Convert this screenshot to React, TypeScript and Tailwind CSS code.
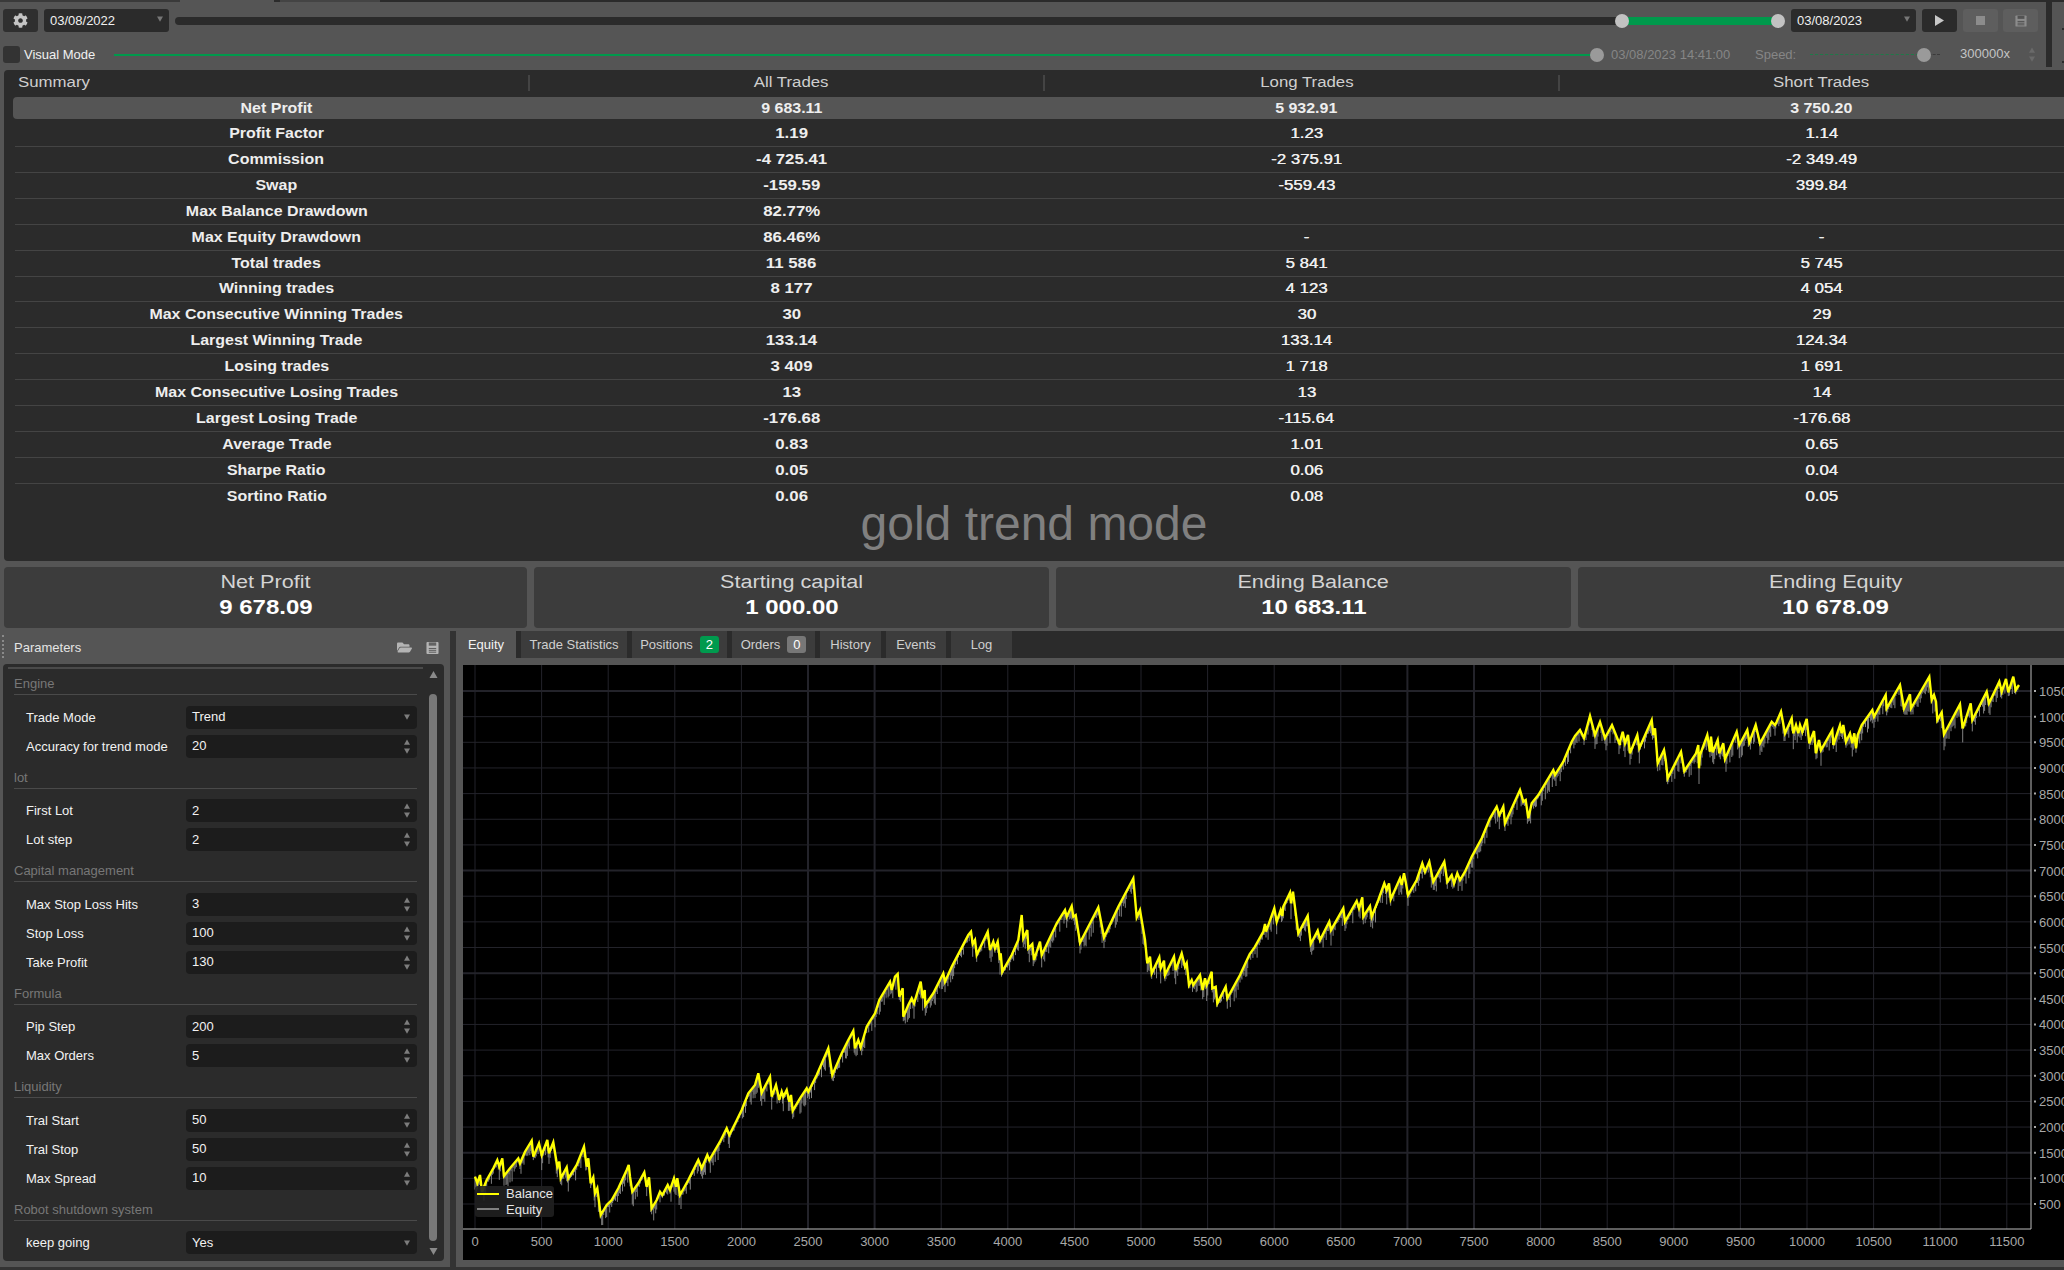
import { FaCog, FaFolderOpen } from "react-icons/fa";

type Row = { label: string; all: string; long: string; short: string };

const rows: Row[] = [
  { label: "Profit Factor", all: "1.19", long: "1.23", short: "1.14" },
  { label: "Commission", all: "-4 725.41", long: "-2 375.91", short: "-2 349.49" },
  { label: "Swap", all: "-159.59", long: "-559.43", short: "399.84" },
  { label: "Max Balance Drawdown", all: "82.77%", long: "", short: "" },
  { label: "Max Equity Drawdown", all: "86.46%", long: "-", short: "-" },
  { label: "Total trades", all: "11 586", long: "5 841", short: "5 745" },
  { label: "Winning trades", all: "8 177", long: "4 123", short: "4 054" },
  { label: "Max Consecutive Winning Trades", all: "30", long: "30", short: "29" },
  { label: "Largest Winning Trade", all: "133.14", long: "133.14", short: "124.34" },
  { label: "Losing trades", all: "3 409", long: "1 718", short: "1 691" },
  { label: "Max Consecutive Losing Trades", all: "13", long: "13", short: "14" },
  { label: "Largest Losing Trade", all: "-176.68", long: "-115.64", short: "-176.68" },
  { label: "Average Trade", all: "0.83", long: "1.01", short: "0.65" },
  { label: "Sharpe Ratio", all: "0.05", long: "0.06", short: "0.04" },
  { label: "Sortino Ratio", all: "0.06", long: "0.08", short: "0.05" },
];

const cards = [
  { title: "Net Profit", value: "9 678.09", width: "w-[523px]" },
  { title: "Starting capital", value: "1 000.00", width: "w-[515px]" },
  { title: "Ending Balance", value: "10 683.11", width: "w-[515px]" },
  { title: "Ending Equity", value: "10 678.09", width: "w-[515px]" },
];

type Param = { label: string; value: string; select?: boolean };
const groups: { name: string; params: Param[] }[] = [
  {
    name: "Engine",
    params: [
      { label: "Trade Mode", value: "Trend", select: true },
      { label: "Accuracy for trend mode", value: "20" },
    ],
  },
  {
    name: "lot",
    params: [
      { label: "First Lot", value: "2" },
      { label: "Lot step", value: "2" },
    ],
  },
  {
    name: "Capital management",
    params: [
      { label: "Max Stop Loss Hits", value: "3" },
      { label: "Stop Loss", value: "100" },
      { label: "Take Profit", value: "130" },
    ],
  },
  {
    name: "Formula",
    params: [
      { label: "Pip Step", value: "200" },
      { label: "Max Orders", value: "5" },
    ],
  },
  {
    name: "Liquidity",
    params: [
      { label: "Tral Start", value: "50" },
      { label: "Tral Stop", value: "50" },
      { label: "Max Spread", value: "10" },
    ],
  },
  {
    name: "Robot shutdown system",
    params: [{ label: "keep going", value: "Yes", select: true }],
  },
];

// traced from the equity curve, each run is [originX, originY, px...] at 3x
const traces: [number, number, number[]][] = [
  [470, 960, [15,650,22,670,30,645,36,695,50,660,70,625,82,600,88,620,97,595,102,648,120,625,145,595,150,610,165,575,185,542,190,590,207,550,215,585,232,540,237,580,250,547,262,620,268,605,272,655,290,622,295,655,320,615,342,560,350,620,355,595,362,670,370,652,375,700,382,685,392,765,410,735,425,720,445,685,470,630,476,615,480,650,487,695,505,670,523,637,530,680,537,652,545,745,560,720,570,695,577,705,593,675,600,690,612,655,618,680,622,655,630,705,655,660,685,600,695,625,712,585,718,600,750,545,770,505,778,525,798,485,815,450,835,400,855,375,865,340,875,398,900,350,905,410,918,375,928,420,935,395,940,410,950,390,958,425,963,405,968,452,990,415,1010,385,1015,395,1040,345,1075,265,1087,345,1115,280,1135,240,1150,212,1155,265,1165,240,1172,262,1190,200,1199,185]],
  [850, 800, [75,640,88,600,120,545,125,570,135,530,143,522,148,590,158,565,160,650,175,615,185,595,192,610,212,545,218,595,224,570,226,615,250,580,280,520,285,545,305,500,355,405,363,395,368,432,375,420,380,465,413,395,420,450,430,425,435,445,443,425,450,480,452,460,457,515,485,465,505,420,515,345,520,415,532,390,535,445,547,432,552,480,570,425,575,465,620,370,645,330,650,350,665,318,670,350,677,345,690,428,745,322,762,412,805,320,850,235,860,352,870,330,885,420,892,490,900,470,905,520,928,472,932,505,942,482,945,525,972,470,977,510,995,460,1005,500,1010,490,1017,555,1025,540,1030,555,1050,525,1058,570,1065,535,1070,555,1085,515,1087,565,1097,560,1102,610,1127,560,1132,595,1170,525,1199,462]],
  [1230, 740, [75,620,100,575,105,552,108,575,133,505,140,545,152,510,157,528,160,500,180,458,183,490,189,455,205,580,233,527,242,612,263,572,270,600,298,545,303,570,340,505,345,545,380,483,387,505,397,472,400,530,420,498,425,530,445,480,463,430,470,450,477,430,482,478,510,415,515,435,522,400,527,425,534,465,560,420,577,370,585,395,598,365,610,425,643,365,652,425,665,405,672,430,682,400,690,420,705,395,725,350,755,295,780,235,800,200,808,225,820,200,825,250,870,150,880,185,887,180,895,235,905,190,925,165,970,90,975,105,1000,65,1025,5]],
  [1560, 700, [45,108,60,90,72,114,90,48,105,105,120,66,135,114,156,75,180,135]],
  [1620, 665, [0,230,8,200,15,235,24,210,30,265,52,210,58,250,95,165,100,210,105,190,113,295,132,255,137,285,143,340,183,260,193,318,228,265,235,240,237,310,240,270,262,210,270,260,273,215,278,262,293,225,298,265,310,235,315,282,350,200,358,240,382,195,388,232,407,180,420,235,455,170,465,180,470,170,483,140,495,205,515,160,520,205,528,180,535,205,540,180,547,200,560,162,568,235,582,198,588,265,597,225,603,255,637,195,640,240,660,180,665,205,670,180,678,230,690,205,697,235,703,205,708,250,713,210,725,180,757,135,762,155,797,90,800,130,840,60,852,130,870,88,873,130,928,35,935,105,942,90,948,110,952,165,965,142,972,208,1020,118,1028,190,1052,115,1057,165,1100,80,1107,115,1138,50,1145,80,1158,42,1165,82,1180,35,1187,75,1197,60]],
];

const curve: [number, number][] = traces.flatMap(([ox, oy, p]) => {
  const pts: [number, number][] = [];
  for (let i = 0; i < p.length; i += 2) pts.push([ox + p[i] / 3, oy + p[i + 1] / 3]);
  return pts;
});

const balanceLine = curve.map(([x, y]) => `${x.toFixed(1)},${y.toFixed(1)}`).join(" ");

// equity dips under the balance line between closed trades
function equitySpikes() {
  let d = "";
  for (let i = 1; i < curve.length; i++) {
    const [x0, y0] = curve[i - 1];
    const [x1, y1] = curve[i];
    const steps = Math.max(1, Math.round(x1 - x0));
    for (let s = 0; s < steps; s++) {
      const x = x0 + ((x1 - x0) * s) / steps;
      const y = y0 + ((y1 - y0) * s) / steps;
      const r = Math.abs(Math.sin(x * 12.9898) * 43758.5453) % 1;
      d += `M${x.toFixed(1)} ${y.toFixed(1)}v${(3 + r * r * 13).toFixed(1)}`;
    }
  }
  return d;
}

const xTicks = Array.from({ length: 24 }, (_, i) => i);
const yTicks = Array.from({ length: 21 }, (_, i) => (i + 1) * 500);
const gridX = (i: number) => 475 + 66.6 * i;
const gridY = (v: number) => 1204 - ((v - 500) / 500) * 25.65;

function Chart() {
  return (
    <svg viewBox="463 665 1601 595" className="block w-[1601px] h-[595px] bg-black">
      {xTicks.map((i) => (
        <line
          key={i}
          x1={gridX(i)}
          x2={gridX(i)}
          y1={665}
          y2={1229}
          stroke="#23232a"
          strokeWidth={[5, 6, 14, 15].includes(i) ? 2 : 1}
        />
      ))}
      {yTicks.map((v) => (
        <g key={v}>
          <line
            x1={463}
            x2={2031}
            y1={gridY(v)}
            y2={gridY(v)}
            stroke="#23232a"
            strokeWidth={[1500, 5000, 7000, 10500].includes(v) ? 2 : 1}
          />
          <line x1={2034} x2={2036} y1={gridY(v)} y2={gridY(v)} stroke="#aaaaaa" strokeWidth={2} />
          <text x={2039} y={gridY(v) + 5} fill="#a8a8a8" fontSize={13}>
            {v}
          </text>
        </g>
      ))}
      {xTicks.map((i) => (
        <text key={i} x={gridX(i)} y={1246} fill="#a8a8a8" fontSize={13} textAnchor="middle">
          {i * 500}
        </text>
      ))}
      <path d={equitySpikes()} stroke="#808080" strokeWidth={1} fill="none" />
      <polyline points={balanceLine} stroke="#ffff00" strokeWidth={2.4} fill="none" strokeLinejoin="miter" />
      <path d="M2031 665V1229H463" stroke="#bdbdbd" strokeWidth={1} fill="none" />
      <rect x={475} y={1186} width={79} height={31} rx={3} fill="#202020" fillOpacity={0.9} />
      <line x1={477} x2={499} y1={1194} y2={1194} stroke="#ffff00" strokeWidth={2} />
      <line x1={477} x2={499} y1={1209} y2={1209} stroke="#808080" strokeWidth={2} />
      <text x={506} y={1198} fill="#e6e6e6" fontSize={13}>
        Balance
      </text>
      <text x={506} y={1214} fill="#e6e6e6" fontSize={13}>
        Equity
      </text>
    </svg>
  );
}

function Tri({ down, className }: { down?: boolean; className?: string }) {
  return (
    <svg viewBox="0 0 8 7" className={className} fill="currentColor">
      <path d={down ? "M0 0h8L4 7z" : "M0 7h8L4 0z"} />
    </svg>
  );
}

function Spinner() {
  return (
    <div className="flex flex-col gap-[3px] text-[#7d7d7d]">
      <Tri className="w-[6px] h-[6px]" />
      <Tri down className="w-[6px] h-[6px]" />
    </div>
  );
}

function Floppy({ className }: { className?: string }) {
  return (
    <svg viewBox="0 0 14 14" className={className} fill="none">
      <rect x="0.5" y="0.5" width="13" height="13" rx="1" fill="currentColor" />
      <rect x="3" y="1" width="8" height="3.5" fill="#2b2b2b" opacity="0.6" />
      <path d="M3 7.5h8M3 9.5h8M3 11.5h8" stroke="#2b2b2b" strokeWidth="1" opacity="0.7" />
    </svg>
  );
}

// the terminal draws this part of the report stretched sideways
function Wide({ children, className = "" }: { children: React.ReactNode; className?: string }) {
  return <span className={`inline-block scale-x-[1.2] whitespace-nowrap ${className}`}>{children}</span>;
}

function WideBold({ children }: { children: React.ReactNode }) {
  return <span className="inline-block scale-x-[1.14] whitespace-nowrap font-bold">{children}</span>;
}

function DateBox({ value, className }: { value: string; className: string }) {
  return (
    <div className={`h-[23px] w-[125px] rounded-[3px] bg-[#2b2b2b] flex items-center pl-[6px] pr-[6px] text-[13px] text-[#f0f0f0] ${className}`}>
      <span className="flex-1">{value}</span>
      <Tri down className="w-[6px] h-[6px] text-[#777777] mb-[4px]" />
    </div>
  );
}

function Toolbar() {
  return (
    <div className="flex h-[65px] shrink-0">
      <div className="w-[2046px] flex flex-col pt-[7px]">
        <div className="flex items-center h-[23px] pl-[3px]">
          <button className="h-[23px] w-[35px] rounded-[3px] bg-[#2f2f2f] flex items-center justify-center text-[#c4c4c4]">
            <FaCog size={15} />
          </button>
          <DateBox value="03/08/2022" className="ml-[6px]" />
          <div className="relative flex ml-[6px] w-[1610px] h-[8px]">
            <div className="flex-1 rounded-l-[4px] bg-[#2b2b2b]" />
            <div className="w-[156px] mr-[7px] bg-[#00994c]" />
            <span className="absolute left-[1440px] top-[-3px] w-[14px] h-[14px] rounded-full bg-[#c2c2c2]" />
            <span className="absolute left-[1596px] top-[-3px] w-[14px] h-[14px] rounded-full bg-[#c2c2c2]" />
          </div>
          <DateBox value="03/08/2023" className="ml-[6px]" />
          <button className="ml-[6px] h-[23px] w-[35px] rounded-[3px] bg-[#2b2b2b] flex items-center justify-center">
            <svg viewBox="0 0 9 11" className="w-[9px] h-[11px]" fill="#c8c8c8">
              <path d="M0 0l9 5.5L0 11z" />
            </svg>
          </button>
          <button className="ml-[6px] h-[23px] w-[35px] rounded-[3px] bg-[#5e5e5e] flex items-center justify-center">
            <span className="w-[9px] h-[9px] bg-[#8c8c8c]" />
          </button>
          <button className="ml-[5px] h-[23px] w-[35px] rounded-[3px] bg-[#5e5e5e] flex items-center justify-center text-[#8c8c8c]">
            <Floppy className="w-[12px] h-[14px]" />
          </button>
        </div>
        <div className="flex items-center h-[17px] mt-[14px] pl-[3px] text-[13px]">
          <span className="w-[17px] h-[17px] rounded-[3px] bg-[#333333]" />
          <span className="ml-[4px] w-[90px] text-[#f0f0f0] leading-none mb-[1px]">Visual Mode</span>
          <div className="relative w-[1483px] h-[2px] bg-[#00994c]">
            <span className="absolute right-[-7px] top-[-6px] w-[14px] h-[14px] rounded-full bg-[#9a9a9a]" />
          </div>
          <span className="ml-[14px] w-[144px] text-[#868686]">03/08/2023 14:41:00</span>
          <span className="w-[55px] text-[#868686]">Speed:</span>
          <div className="relative w-[130px] h-[1px] flex">
            <span className="w-[114px] border-t border-dashed border-[#1f7a48]" />
            <span className="flex-1 border-t border-dashed border-[#3b3b3b]" />
            <span className="absolute left-[107px] top-[-6px] w-[14px] h-[14px] rounded-full bg-[#9a9a9a]" />
          </div>
          <span className="ml-[20px] w-[69px] text-[#c4c4c4] mb-[1px]">300000x</span>
          <div className="flex flex-col gap-[3px] text-[#6a6a6a]">
            <Tri className="w-[6px] h-[6px]" />
            <Tri down className="w-[6px] h-[6px]" />
          </div>
        </div>
      </div>
      <div className="w-[6px] bg-[#2b2b2b]" />
      <div className="flex-1 flex flex-col items-end gap-[31px] pt-[26px]">
        <span className="w-[2px] h-[2px] bg-[#2b2b2b]" />
        <span className="w-[2px] h-[2px] bg-[#2b2b2b]" />
      </div>
    </div>
  );
}

function Summary() {
  return (
    <div className="ml-[4px] mt-[3px] h-[491px] shrink-0 rounded-l-[4px] bg-[#2b2b2b] overflow-hidden text-[14px] text-[#eeeeee]">
      <div className="grid grid-cols-[repeat(4,515px)] h-[25px] pl-[10px] text-[#cfcfcf]">
        {["Summary", "All Trades", "Long Trades", "Short Trades"].map((h, i) => (
          <div key={h} className={`relative flex items-center ${i === 0 ? "pl-[4px]" : "justify-center pl-[10px]"}`}>
            <Wide className={i === 0 ? "origin-left" : ""}>{h}</Wide>
            {i < 3 && <span className="absolute right-[-1px] top-[5px] h-[16px] w-[2px] bg-[#444444]" />}
          </div>
        ))}
      </div>
      <div className="mt-[2px] ml-[9px] h-[22px] rounded-l-[4px] bg-[#555555] grid grid-cols-[repeat(4,515px)] pl-[6px] items-center">
        {["Net Profit", "9 683.11", "5 932.91", "3 750.20"].map((v) => (
          <div key={v} className="text-center">
            <WideBold>{v}</WideBold>
          </div>
        ))}
      </div>
      <div className="mt-[2px] ml-[11px]">
        {rows.map((r, i) => (
          <div
            key={r.label}
            className={`grid grid-cols-[repeat(4,515px)] pl-[4px] h-[25.93px] items-center ${i < rows.length - 1 ? "border-b border-[#444444]" : ""}`}
          >
            <div className="text-center">
              <WideBold>{r.label}</WideBold>
            </div>
            <div className="text-center">
              <Wide className="font-bold">{r.all}</Wide>
            </div>
            <div className="text-center [text-shadow:0.3px_0_0_currentColor]">
              <Wide>{r.long}</Wide>
            </div>
            <div className="text-center [text-shadow:0.3px_0_0_currentColor]">
              <Wide>{r.short}</Wide>
            </div>
          </div>
        ))}
      </div>
      <div className="mt-[-14px] text-center text-[48px] leading-[56px] text-[#808080]">gold trend mode</div>
    </div>
  );
}

function Cards() {
  return (
    <div className="flex gap-[7px] ml-[4px] mt-[6px] h-[61px] shrink-0">
      {cards.map((c) => (
        <div key={c.title} className={`${c.width} shrink-0 rounded-[4px] bg-[#3c3c3c] flex flex-col items-center pt-[4px]`}>
          <Wide className="text-[18px] leading-[22px] text-[#d4d4d4]">{c.title}</Wide>
          <Wide className="text-[20px] leading-[24px] mt-[2px] font-bold text-white">{c.value}</Wide>
        </div>
      ))}
    </div>
  );
}

function ParamRow({ label, value, select }: Param) {
  return (
    <div className="flex items-center h-[23px] text-[13px] text-[#f2f2f2]">
      <span className="w-[172px] pl-[12px] leading-none">{label}</span>
      <div className="w-[231px] h-[23px] rounded-[4px] bg-[#1c1c1c] flex items-center pl-[6px] pr-[7px]">
        <span className="flex-1">{value}</span>
        {select ? <Tri down className="w-[6px] h-[6px] text-[#7d7d7d]" /> : <Spinner />}
      </div>
    </div>
  );
}

function Parameters() {
  return (
    <div className="w-[450px] shrink-0 flex flex-col">
      <div className="relative h-[33px] flex items-center pl-[14px] pr-[11px] text-[13px] text-[#e4e4e4]">
        <span className="absolute left-[2px] top-[4px] h-[23px] w-[2px] border-l-2 border-dotted border-[#8a8a8a]" />
        <span className="flex-1">Parameters</span>
        <FaFolderOpen size={15} className="text-[#b4b4b4]" />
        <Floppy className="ml-[14px] w-[13px] h-[14px] text-[#b4b4b4]" />
      </div>
      <div className="relative ml-[3px] w-[441px] h-[597px] rounded-[4px] bg-[#2b2b2b] pl-[11px]">
        <span className="absolute left-[5px] top-[3px] w-[415px] h-[2px] bg-[#4a4a4a]" />
        <Tri className="absolute left-[426px] top-[7px] w-[9px] h-[7px] text-[#8a8a8a]" />
        <span className="absolute left-[426px] top-[30px] w-[8px] h-[547px] rounded-full bg-[#787878]" />
        <Tri down className="absolute left-[426px] top-[584px] w-[9px] h-[7px] text-[#8a8a8a]" />
        <div className="w-[403px]">
          {groups.map((g) => (
            <div key={g.name}>
              <div className="h-[31px] flex items-end pb-[3px] border-b border-[#4a4a4a] text-[13px] leading-[15px] text-[#777777]">
                {g.name}
              </div>
              <div className="flex flex-col gap-[6px] pt-[10.5px]">
                {g.params.map((p) => (
                  <ParamRow key={p.label} {...p} />
                ))}
              </div>
            </div>
          ))}
        </div>
      </div>
    </div>
  );
}

const tabs = [
  { label: "Trade Statistics", width: "w-[106px]" },
  { label: "Positions", width: "w-[95px]", badge: "2", badgeColor: "bg-[#009a4e]" },
  { label: "Orders", width: "w-[83px]", badge: "0", badgeColor: "bg-[#777777]" },
  { label: "History", width: "w-[61px]" },
  { label: "Events", width: "w-[60px]" },
  { label: "Log", width: "w-[61px]" },
];

function Results() {
  return (
    <div className="flex-1 flex flex-col min-w-0">
      <div className="flex h-[27px] bg-[#2b2b2b] text-[13px]">
        <div className="w-[60px] bg-[#555555] flex items-center justify-center text-[#f2f2f2]">Equity</div>
        {tabs.map((t) => (
          <div
            key={t.label}
            className={`${t.width} ml-[5px] bg-[#3c3c3c] flex items-center justify-center gap-[7px] text-[#cfcfcf]`}
          >
            <span>{t.label}</span>
            {t.badge && (
              <span className={`${t.badgeColor} w-[19px] h-[17px] rounded-[3px] flex items-center justify-center text-white`}>
                {t.badge}
              </span>
            )}
          </div>
        ))}
      </div>
      <div className="pl-[7px] pt-[7px] overflow-hidden">
        <Chart />
      </div>
    </div>
  );
}

export default function App() {
  return (
    <div className="w-[2064px] h-[1270px] overflow-hidden bg-[#555555] flex flex-col font-['Liberation_Sans',Arial,sans-serif]">
      <div className="flex h-[2px] shrink-0 bg-[#2b2b2b]">
        <span className="w-[180px] bg-[#3a3a3a]" />
        <span className="w-[94px] bg-[#555555]" />
        <span className="w-[6px]" />
        <span className="w-[100px] bg-[#444444]" />
      </div>
      <Toolbar />
      <Summary />
      <Cards />
      <div className="flex mt-[3px] flex-1 min-h-0">
        <Parameters />
        <div className="w-[6px] shrink-0 bg-[#333333]" />
        <Results />
      </div>
      <div className="h-[3px] shrink-0 bg-[#333333]" />
    </div>
  );
}
